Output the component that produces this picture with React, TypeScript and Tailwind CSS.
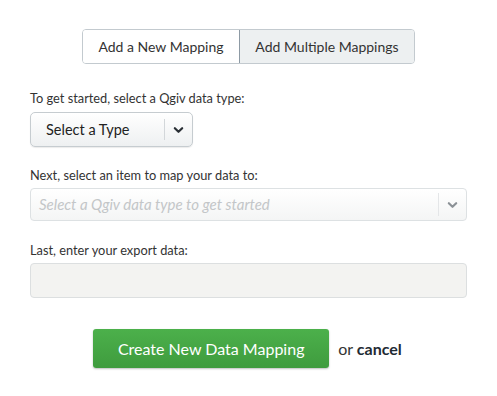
import React, { useState } from 'react';

const Chevron: React.FC<{ className?: string }> = ({ className }) => (
  <svg viewBox="0 0 12 8" className={className} fill="none" stroke="currentColor" strokeWidth="2.4" strokeLinecap="round" strokeLinejoin="round">
    <path d="M2 2l4 4 4-4" />
  </svg>
);

export default function App() {
  const [mode, setMode] = useState<'single' | 'multi'>('single');

  return (
    <div className="w-[497px] h-[396px] bg-white text-[#333] font-['Lato','Liberation_Sans',sans-serif]">
      <div className="px-[30px] pt-[29px]">
        {/* Mode toggle */}
        <div className="flex justify-center">
          <div className="flex h-[35px] rounded-[4px] border border-[#c3cacf] overflow-hidden text-[14px]">
            <button
              onClick={() => setMode('single')}
              className="w-[157px] bg-white text-[#333] border-r border-[#8d9aa4]"
            >
              Add a New Mapping
            </button>
            <button
              onClick={() => setMode('multi')}
              className="w-[174px] bg-[#edf0f1] text-[#333]"
            >
              Add Multiple Mappings
            </button>
          </div>
        </div>

        {/* Data type */}
        <div className="mt-[25px] text-[12.8px] leading-[18px]">To get started, select a Qgiv data type:</div>
        <div className="mt-[5px] flex w-[163px] h-[35px] rounded-[5px] border border-[#c6ccd0] bg-gradient-to-b from-white to-[#eef0f1] shadow-[0_1px_1px_rgba(0,0,0,0.08)]">
          <div className="flex-1 flex items-center pl-[15px] text-[14.5px] text-[#222]">Select a Type</div>
          <div className="my-[6px] w-px bg-[#d3d7da]" />
          <div className="w-[27px] flex items-center justify-center text-[#2a2f35]">
            <Chevron className="w-[11px] h-[8px]" />
          </div>
        </div>

        {/* Item */}
        <div className="mt-[19px] text-[12.8px] leading-[18px]">Next, select an item to map your data to:</div>
        <div className="mt-[4px] flex h-[33px] rounded-[4px] border border-[#dde1e3] bg-gradient-to-b from-white to-[#f4f5f5]">
          <div className="flex-1 flex items-center pl-[8px] text-[15px] italic text-[#c3c6c8]">Select a Qgiv data type to get started</div>
          <div className="my-[4px] w-px bg-[#e4e6e8]" />
          <div className="w-[27px] flex items-center justify-center text-[#8c9297]">
            <Chevron className="w-[11px] h-[8px]" />
          </div>
        </div>

        {/* Export data */}
        <div className="mt-[20px] text-[12.8px] leading-[18px]">Last, enter your export data:</div>
        <input
          className="mt-[4px] block w-full h-[35px] rounded-[4px] border border-[#dcdfe0] bg-[#f3f3f1] outline-none px-2"
        />

        {/* Actions */}
        <div className="mt-[31px] flex items-center justify-center gap-[9px] pr-[2px]">
          <button className="w-[236px] h-[39px] rounded-[3px] bg-gradient-to-b from-[#4cb04b] to-[#3f9c3e] text-white text-[16px] shadow-[0_1px_2px_rgba(0,0,0,0.25)]">
            Create New Data Mapping
          </button>
          <span className="text-[16px] text-[#333]">
            or <a className="font-bold text-[#1f2a33]">cancel</a>
          </span>
        </div>
      </div>
    </div>
  );
}
